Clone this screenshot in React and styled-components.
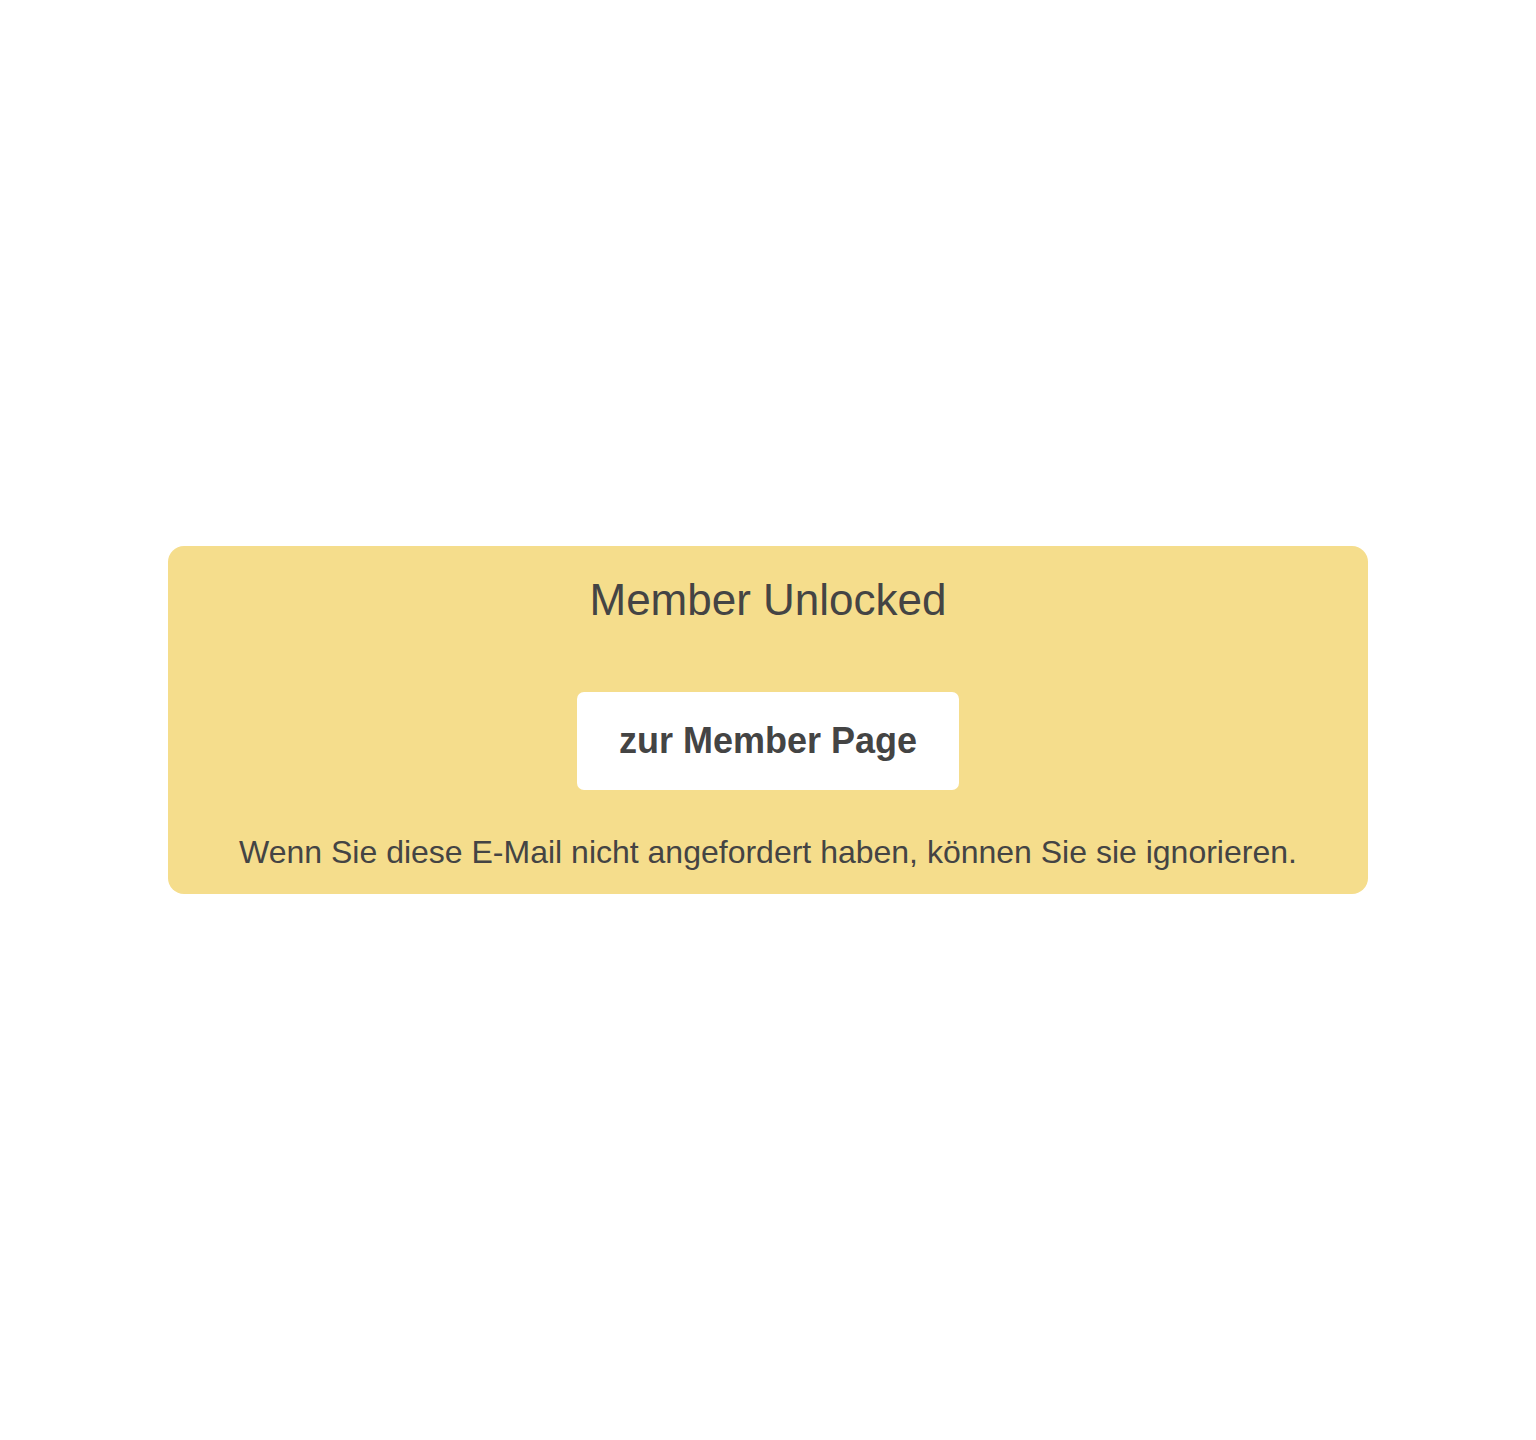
import React from 'react';
import styled, { createGlobalStyle } from 'styled-components';

const GlobalStyle = createGlobalStyle`
  html, body {
    margin: 0;
    padding: 0;
    background: #ffffff;
  }
  body {
    font-family: "Liberation Sans", Arial, Helvetica, sans-serif;
    color: #444444;
  }
`;

const Page = styled.div`
  width: 100%;
  min-height: 1440px;
  display: flex;
  align-items: center;
  justify-content: center;
`;

const Card = styled.div`
  width: 1200px;
  box-sizing: border-box;
  background: #f5dd8c;
  border-radius: 16px;
  padding: 28px 20px 23px;
  display: flex;
  flex-direction: column;
  align-items: center;
  text-align: center;
`;

const Title = styled.h1`
  margin: 0;
  font-size: 44px;
  font-weight: 400;
  line-height: 51px;
  color: #444444;
`;

const ActionButton = styled.a`
  margin-top: 67px;
  display: inline-block;
  background: #ffffff;
  border-radius: 7px;
  padding: 28px 42px;
  font-size: 36px;
  font-weight: 700;
  line-height: 42px;
  color: #444444;
  text-decoration: none;
  cursor: pointer;
`;

const Note = styled.p`
  margin: 44px 0 0;
  font-size: 32px;
  line-height: 37px;
  color: #444444;
`;

const App = () => {
  return (
    <>
      <GlobalStyle />
      <Page>
        <Card>
          <Title>Member Unlocked</Title>
          <ActionButton>zur Member Page</ActionButton>
          <Note>
            Wenn Sie diese E-Mail nicht angefordert haben, können Sie sie ignorieren.
          </Note>
        </Card>
      </Page>
    </>
  );
};

export default App;
